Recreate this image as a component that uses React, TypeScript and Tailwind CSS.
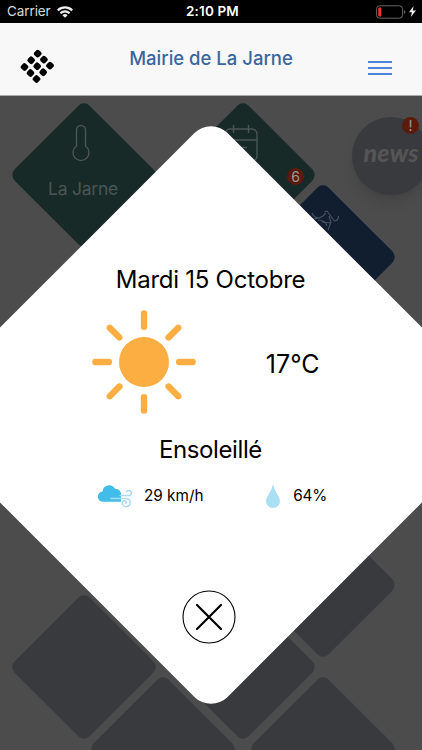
import { useState } from "react";

interface Tuile {
    id: string;
    x: number;
    y: number;
    couleur: string;
}

const tuiles: Tuile[] = [
    { id: "meteo", x: 83.5, y: 79, couleur: "bg-[#172a27]" },
    { id: "agenda", x: 243, y: 79, couleur: "bg-[#172a27]" },
    { id: "animaux", x: 322.5, y: 161, couleur: "bg-[#101e30]" },
    { id: "vide1", x: 322.5, y: 489, couleur: "bg-[#393a3e]" },
    { id: "vide2", x: 83.5, y: 571, couleur: "bg-[#393a3e]" },
    { id: "vide3", x: 243, y: 571, couleur: "bg-[#393a3e]" },
    { id: "vide4", x: 163, y: 653, couleur: "bg-[#393a3e]" },
    { id: "vide5", x: 322.5, y: 653, couleur: "bg-[#393a3e]" },
];

const angles = [0, 45, 90, 135, 180, 225, 270, 315];

const StatusBar = () => (
    <div className="flex h-[23px] items-center bg-black px-[7px] text-white">
        <div className="flex flex-1 items-center gap-[6px]">
            <span className="pt-px text-[13.5px] leading-none tracking-[-0.1px] text-[#d8d8d8]">Carrier</span>
            <svg className="h-[12px] w-[16px]" viewBox="0 0 16 12" fill="none" stroke="#eee" strokeWidth="2.2">
                <path d="M.8 4.4a10.3 10.3 0 0 1 14.4 0M3.4 7.2a6.6 6.6 0 0 1 9.2 0" />
                <path d="M5.4 9.2a3.8 3.8 0 0 1 5.2 0L8 11.8z" fill="#eee" stroke="none" />
            </svg>
        </div>
        <span className="mr-[-3px] pt-px text-[13.5px] font-semibold leading-none tracking-[0.15px]">2:10 PM</span>
        <div className="flex flex-1 items-center justify-end gap-[3px]">
            <svg className="h-[14px] w-[30px]" viewBox="0 0 30 14" fill="none">
                <rect x=".6" y=".8" width="26" height="12.4" rx="3" stroke="#666" />
                <rect x="2.2" y="2.5" width="3.2" height="9" rx="1" fill="#e5352c" />
                <path d="M28 5v4q1.4-.5 1.4-2T28 5z" fill="#666" />
            </svg>
            <svg className="-mr-[1px] h-[11px] w-[7px]" viewBox="0 0 7 11" fill="#eee">
                <path d="M4.6 0 0 6.2h2.9L1.8 11 7 4.5H3.8z" />
            </svg>
        </div>
    </div>
);

const Header = () => (
    <header className="flex h-[73px] items-center justify-between border-b border-[#a9aba9] bg-[#f8f8f8] pl-[20px] pr-[30px]">
        <svg className="mt-[13px] h-[34px] w-[34px]" viewBox="0 0 34 34">
            {[[17.7, 4.6], [23.9, 10.6], [30, 16.6], [11.2, 11.3], [17.2, 17.3], [23.2, 23.3], [4.5, 18], [10.5, 24], [16.5, 30]].map(([x, y]) => (
                <rect key={`${x}-${y}`} x={x - 3.3} y={y - 3.3} width="6.6" height="6.6" rx="2" transform={`rotate(43 ${x} ${y})`} />
            ))}
        </svg>
        <h1 className="mb-[1px] text-[18.5px] font-medium text-[#3a679f]">Mairie de La Jarne</h1>
        <button className="mt-[17px] flex w-6 flex-col gap-[4px]" aria-label="Menu">
            <span className="h-[2px] bg-[#4a84d8]" />
            <span className="h-[2px] bg-[#4a84d8]" />
            <span className="h-[2px] bg-[#4a84d8]" />
        </button>
    </header>
);

const Soleil = () => (
    <svg className="h-[104px] w-[104px]" viewBox="0 0 104 104" stroke="#fcae42" strokeWidth="6.4" strokeLinecap="round">
        <circle cx="52" cy="52" r="25" fill="#fcae42" stroke="none" />
        {angles.map((angle) => (
            <path key={angle} d={angle % 90 === 0 ? "M52 3.4v13.4" : "M52 3.6v13.6"} transform={`rotate(${angle} 52 52)`} />
        ))}
    </svg>
);

const Vent = () => (
    <svg className="h-[24px] w-[36px]" viewBox="0 0 36 24" fill="none" strokeLinecap="round">
        <path d="M6.2 17.8A5.1 5.1 0 0 1 5.6 7.6 6.6 6.6 0 0 1 18 4.8a5.4 5.4 0 0 1 6 6.2v6.8z" fill="#42bce9" />
        <g stroke="#a9dcf1" strokeWidth="1.5">
            <path d="M23 11.6h9.2a2.6 2.6 0 1 0-2.6-3.9M14 14.4h15.2a4 4 0 1 1-4 4.6q.2-2.6 2.6-2.2 2 .6 1.200 2.400" />
        </g>
    </svg>
);

const App = () => {
    const [ouvert, setOuvert] = useState(true);

    return (
        <div className="flex h-[750px] w-[422px] flex-col overflow-hidden font-['Inter','Liberation_Sans',sans-serif]">
            <StatusBar />
            <Header />
            <main className="relative flex-1 overflow-hidden bg-[#4c4c4c]">
                {tuiles.map((tuile) => (
                    <div
                        key={tuile.id}
                        className={`absolute -ml-[53px] -mt-[53px] h-[106px] w-[106px] rotate-45 rounded-[8px] ${tuile.couleur}`}
                        style={{ left: tuile.x, top: tuile.y }}
                    />
                ))}

                <div className="absolute left-[42px] top-[28px] flex w-[82px] flex-col items-center gap-[13px] text-[#4c5554]">
                    <svg className="mr-[4px] h-[40px] w-[20px]" viewBox="0 0 20 40" fill="none" stroke="currentColor" strokeWidth="1.4">
                        <path d="M5.5 22V6a4.5 4.5 0 0 1 9 0v16a8 8 0 1 1-9 0z" />
                    </svg>
                    <span className="whitespace-nowrap text-[17.5px] leading-6 tracking-[-0.25px]">La Jarne</span>
                </div>

                <svg className="absolute left-[224px] top-[28px] h-[40px] w-[36px] text-[#4c5554]" viewBox="0 0 36 40" fill="none" stroke="currentColor" strokeWidth="1.4">
                    <rect x="1" y="5" width="32" height="32" rx="5" />
                    <path d="M1 16h32M9.5 1v8M24.5 1v8M17 23.5h6" />
                </svg>
                <div className="absolute left-[287px] top-[72px] flex h-[17px] w-[17px] items-center justify-center rounded-full bg-[#5b1a0b] text-[14px] text-[#999]">6</div>

                <svg className="absolute left-[309px] top-[112px] h-[28px] w-[32px] text-[#4a5361]" viewBox="0 0 32 28" fill="none" stroke="currentColor" strokeWidth="1.1">
                    <path d="M15.5 3.5 18 3l7.5 10q4-.5 4-5M17 5l-3 3-4 2Q5 10 3 5M3 11q4 0 7-1M9 12q7 0 9 6M20 8l2 6-3 8M13 14l9 1" />
                </svg>

                <div className="absolute left-[352px] top-[21px] flex h-[78px] w-[78px] items-center justify-center rounded-full bg-[#393a3e] pb-[7px] shadow-lg">
                    <span className="font-['Lato','Inter',sans-serif] text-[25px] font-black italic tracking-[0.1px] text-[#555]">news</span>
                </div>
                <div className="absolute left-[402px] top-[21px] flex h-[17px] w-[17px] items-center justify-center rounded-full bg-[#5b1a0b] text-[14px] text-[#999]">!</div>

                {ouvert && (
                    <>
                        <div className="absolute -left-[0.5px] top-[108px] h-[422px] w-[422px] rotate-45 rounded-[23px] bg-white" />
                        <section className="absolute inset-0 flex flex-col items-center pr-px pt-[167px] text-black">
                            <h2 className="text-[24px] leading-[34px] tracking-[-0.25px]">Mardi 15 Octobre</h2>
                            <div className="mt-[13px] flex w-[238px] items-center justify-between pr-[10px]">
                                <Soleil />
                                <span className="pt-[5px] text-[25px]">17°C</span>
                            </div>
                            <h3 className="mt-[19px] text-[24px] leading-[34px] tracking-[-0.4px]">Ensoleillé</h3>
                            <div className="mt-[17px] flex h-[24px] w-[231px] items-center justify-between text-[15.3px]">
                                <div className="ml-[2px] flex items-center gap-[11px]">
                                    <Vent />
                                    <span>29 km/h</span>
                                </div>
                                <div className="-mr-px flex items-center gap-[13px]">
                                    <svg className="h-[24px] w-[14px]" viewBox="0 0 14 24" fill="#abdff3">
                                        <path d="M7 0Q8 5 12 11.5q2 3 2 5.5a7 7 0 0 1-14 0q0-2.5 2-5.5Q6 5 7 0z" />
                                    </svg>
                                    <span className="tracking-[-0.2px]">64%</span>
                                </div>
                            </div>
                            <button onClick={() => setOuvert(false)} className="mr-[3px] mt-[82px]" aria-label="Fermer">
                                <svg className="h-[54px] w-[54px]" viewBox="0 0 54 54" fill="none" stroke="black">
                                    <circle cx="27" cy="27" r="26" strokeWidth="1.1" />
                                    <path d="m15 15 24 24M39 15 15 39" strokeWidth="2.2" strokeLinecap="round" />
                                </svg>
                            </button>
                        </section>
                    </>
                )}
            </main>
        </div>
    );
};

export default App;
